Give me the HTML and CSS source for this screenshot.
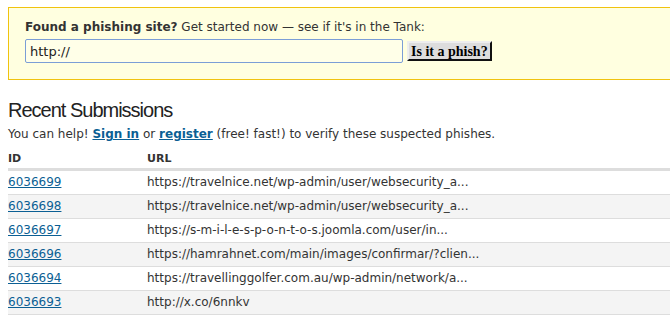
FILE: index.html
```html
<!DOCTYPE html>
<html lang="en">
<head>
    <meta charset="UTF-8">
    <title>PhishTank</title>
    <link rel="stylesheet" href="styles.css">
</head>
<body>

<div class="submit-box">
    <form class="submit-form">
        <p class="submit-title"><b>Found a phishing site?</b> Get started now &mdash; see if it's in the Tank:</p>
        <div class="submit-row">
            <input type="text" class="url-input" value="http://">
            <button type="button" class="phish-btn">Is it a phish?</button>
        </div>
    </form>
</div>

<h2 class="section-title">Recent Submissions</h2>
<p class="help-text">You can help! <a href="#">Sign in</a> or <a href="#">register</a> (free! fast!) to verify these suspected phishes.</p>

<table class="data">
    <thead>
        <tr>
            <th class="col-id">ID</th>
            <th>URL</th>
        </tr>
    </thead>
    <tbody>
        <tr><td><a href="#">6036699</a></td><td>https://travelnice.net/wp-admin/user/websecurity_a...</td></tr>
        <tr><td><a href="#">6036698</a></td><td>https://travelnice.net/wp-admin/user/websecurity_a...</td></tr>
        <tr><td><a href="#">6036697</a></td><td>https://s-m-i-l-e-s-p-o-n-t-o-s.joomla.com/user/in...</td></tr>
        <tr><td><a href="#">6036696</a></td><td>https://hamrahnet.com/main/images/confirmar/?clien...</td></tr>
        <tr><td><a href="#">6036694</a></td><td>https://travellinggolfer.com.au/wp-admin/network/a...</td></tr>
        <tr><td><a href="#">6036693</a></td><td>http://x.co/6nnkv</td></tr>
    </tbody>
</table>

</body>
</html>
```

FILE: styles.css
```css
html {
    overflow: hidden;
}
body {
    margin: 0;
    padding: 7px 8px;
    width: 760px;
    font-family: "DejaVu Sans", Verdana, sans-serif;
    font-size: 12px;
    line-height: 15px;
    color: #333;
    background-color: #fff;
}
a {
    color: #0b5f94;
}
.submit-box {
    background-color: #ffffe0;
    border: 1px solid #f0c30f;
    padding: 12px 16px 16px;
}
.submit-title {
    margin: 0 0 4px;
}
.submit-row {
    display: flex;
    align-items: center;
    gap: 4px;
}
.url-input {
    width: 378px;
    height: 24px;
    box-sizing: border-box;
    border: 1px solid #7b9ed6;
    border-radius: 2px;
    background-color: #ffffe8;
    font-family: "DejaVu Sans", Verdana, sans-serif;
    font-size: 13px;
    color: #222;
    padding: 0 4px;
    margin: 0;
}
.phish-btn {
    font-family: "Liberation Serif", "Times New Roman", serif;
    font-weight: bold;
    font-size: 14px;
    background-color: #ddd;
    border: 2px outset #888;
    border-top-color: #eee;
    border-left-color: #eee;
    border-right-color: #666;
    border-bottom-color: #666;
    padding: 0 2px;
    height: 20px;
    line-height: 15px;
    color: #000;
    margin: 0;
}
.section-title {
    font-family: "Liberation Sans", Arial, sans-serif;
    font-weight: normal;
    font-size: 20px;
    line-height: 23px;
    letter-spacing: -1px;
    color: #222;
    margin: 19px 0 5px;
}
.help-text {
    margin: 0 0 9px;
}
.help-text a {
    font-weight: bold;
}
.data {
    width: 100%;
    border-collapse: collapse;
}
.data th {
    text-align: left;
    font-size: 11px;
    padding: 0 0 2px;
    border-bottom: 3px solid #ddd;
}
.data .col-id {
    width: 139px;
}
.data td {
    padding: 0;
    height: 23px;
    border-bottom: 1px solid #ddd;
}
.data tbody tr:nth-child(even) {
    background-color: #f4f4f4;
}
```
